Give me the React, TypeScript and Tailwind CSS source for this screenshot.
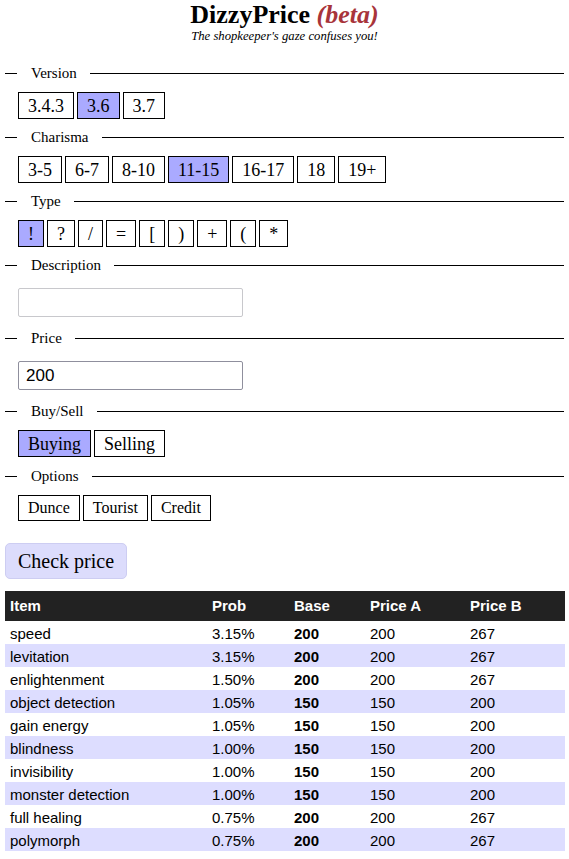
import React from 'react';

const serif = { fontFamily: '"Liberation Serif", "Times New Roman", serif' };

const versions = ['3.4.3', '3.6', '3.7'];
const charismas = ['3-5', '6-7', '8-10', '11-15', '16-17', '18', '19+'];
const types = ['!', '?', '/', '=', '[', ')', '+', '(', '*'];
const options = ['Dunce', 'Tourist', 'Credit'];

const rows = [
  { item: 'speed', prob: '3.15%', base: 200, a: 200, b: 267 },
  { item: 'levitation', prob: '3.15%', base: 200, a: 200, b: 267 },
  { item: 'enlightenment', prob: '1.50%', base: 200, a: 200, b: 267 },
  { item: 'object detection', prob: '1.05%', base: 150, a: 150, b: 200 },
  { item: 'gain energy', prob: '1.05%', base: 150, a: 150, b: 200 },
  { item: 'blindness', prob: '1.00%', base: 150, a: 150, b: 200 },
  { item: 'invisibility', prob: '1.00%', base: 150, a: 150, b: 200 },
  { item: 'monster detection', prob: '1.00%', base: 150, a: 150, b: 200 },
  { item: 'full healing', prob: '0.75%', base: 200, a: 200, b: 267 },
  { item: 'polymorph', prob: '0.75%', base: 200, a: 200, b: 267 },
];

const Legend: React.FC<{ label: string }> = ({ label }) => (
  <div className="flex items-center h-[18px]">
    <div className="w-[12px] border-t border-black" />
    <span className="pl-[14px] pr-[13px] text-[15px] leading-[18px]">{label}</span>
    <div className="flex-1 border-t border-black" />
  </div>
);

const Toggle: React.FC<{ label: string; active?: boolean; small?: boolean }> = ({ label, active, small }) => (
  <button
    className={
      small
        ? 'h-[26px] px-[9px] text-[16px] leading-[18px] border border-black ' + (active ? 'bg-[#aaaaff]' : 'bg-white')
        : 'h-[27px] px-[9px] text-[18px] leading-[20px] border border-black ' + (active ? 'bg-[#aaaaff]' : 'bg-white')
    }
    style={serif}
  >
    {label}
  </button>
);

const ButtonGroup: React.FC<{ items: string[]; active?: string; small?: boolean }> = ({ items, active, small }) => (
  <div className="flex gap-[3px] pl-[13px] mt-[10px]">
    {items.map((it) => (
      <Toggle key={it} label={it} active={it === active} small={small} />
    ))}
  </div>
);

export default function App() {
  return (
    <div className="w-[569px] min-h-[859px] bg-white text-black" style={serif}>
      <div className="text-center">
        <h1 className="text-[26px] leading-[29px] font-bold">
          DizzyPrice <span className="italic text-[#a8343a]">(beta)</span>
        </h1>
        <p className="text-[12.7px] leading-[14px] italic">The shopkeeper's gaze confuses you!</p>
      </div>

      <div className="mx-[5px] mt-[21px]">
        <Legend label="Version" />
        <ButtonGroup items={versions} active="3.6" />

        <div className="mt-[9px]">
          <Legend label="Charisma" />
          <ButtonGroup items={charismas} active="11-15" />
        </div>

        <div className="mt-[9px]">
          <Legend label="Type" />
          <ButtonGroup items={types} active="!" />
        </div>

        <div className="mt-[9px]">
          <Legend label="Description" />
          <div className="pl-[13px] mt-[14px]">
            <input
              className="w-[225px] h-[29px] border border-[#c8c8cc] rounded-[2px] px-[7px] text-[17px] outline-none"
              style={{ fontFamily: '"Liberation Sans", Arial, sans-serif' }}
              defaultValue=""
            />
          </div>
        </div>

        <div className="mt-[12px]">
          <Legend label="Price" />
          <div className="pl-[13px] mt-[14px]">
            <input
              className="w-[225px] h-[29px] border border-[#8f8f9d] rounded-[2px] px-[7px] text-[17px] outline-none"
              style={{ fontFamily: '"Liberation Sans", Arial, sans-serif' }}
              defaultValue="200"
            />
          </div>
        </div>

        <div className="mt-[12px]">
          <Legend label="Buy/Sell" />
          <ButtonGroup items={['Buying', 'Selling']} active="Buying" />
        </div>

        <div className="mt-[10px]">
          <Legend label="Options" />
          <ButtonGroup items={options} small />
        </div>
      </div>

      <div className="px-[5px] mt-[22px]">
        <button
          className="h-[36px] px-[12px] text-[20px] leading-[23px] bg-[#dcdcfc] border border-[#cdcdf2] rounded-[5px]"
          style={serif}
        >
          Check price
        </button>
      </div>

      <div className="px-[5px] mt-[12px]">
        <table
          className="w-[560px] border-collapse text-[15px] table-fixed"
          style={{ fontFamily: '"Liberation Sans", Arial, sans-serif' }}
        >
          <colgroup>
            <col className="w-[202px]" />
            <col className="w-[82px]" />
            <col className="w-[76px]" />
            <col className="w-[100px]" />
            <col className="w-[100px]" />
          </colgroup>
          <thead>
            <tr className="bg-[#222222] text-white h-[30px]">
              <th className="text-left font-bold pl-[5px]">Item</th>
              <th className="text-left font-bold pl-[5px]">Prob</th>
              <th className="text-left font-bold pl-[5px]">Base</th>
              <th className="text-left font-bold pl-[5px]">Price A</th>
              <th className="text-left font-bold pl-[5px]">Price B</th>
            </tr>
          </thead>
          <tbody>
            {rows.map((r, i) => (
              <tr key={r.item} className={i % 2 === 1 ? 'bg-[#ddddff]' : 'bg-white'}>
                <td className="pl-[5px] pt-[4px] pb-[2px] leading-[17px]">{r.item}</td>
                <td className="pl-[5px] pt-[4px] pb-[2px] leading-[17px]">{r.prob}</td>
                <td className="pl-[5px] pt-[4px] pb-[2px] leading-[17px] font-bold">{r.base}</td>
                <td className="pl-[5px] pt-[4px] pb-[2px] leading-[17px]">{r.a}</td>
                <td className="pl-[5px] pt-[4px] pb-[2px] leading-[17px]">{r.b}</td>
              </tr>
            ))}
          </tbody>
        </table>
      </div>
    </div>
  );
}
